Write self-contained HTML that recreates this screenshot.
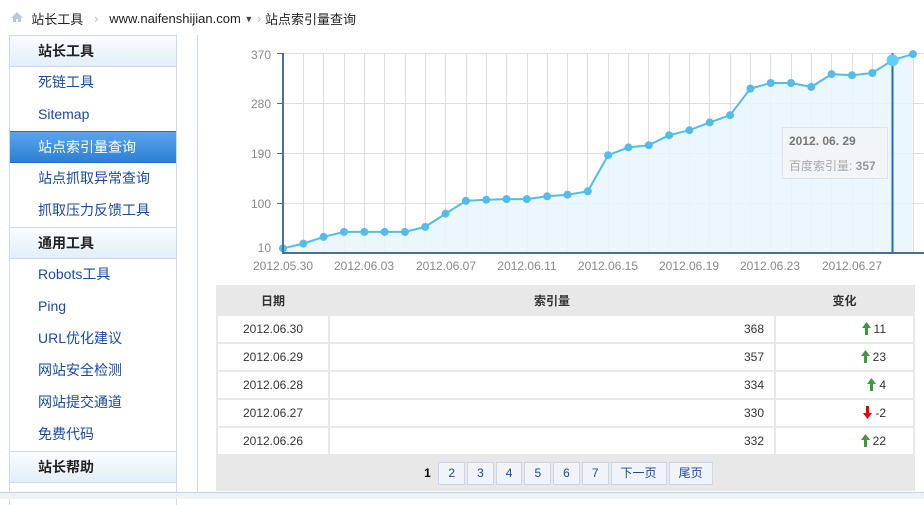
<!DOCTYPE html>
<html><head><meta charset="utf-8"><style>
*{margin:0;padding:0;box-sizing:border-box}
body{width:924px;height:499px;overflow:hidden;background:#fff;font-family:"Liberation Sans","Noto Sans CJK SC",sans-serif;font-size:13px;color:#333;position:relative}
.bc{position:absolute;top:9px;left:10px;font-size:13px;color:#222;white-space:nowrap}
.bc span{display:inline-block;vertical-align:middle}
.side{position:absolute;left:9px;top:35px;width:168px;height:470px;border:1px solid #c5dbef;border-bottom:none;border-top:none}
.side div{height:32px;line-height:31px;padding-left:28px;font-size:14px;color:#1a4aa0}
.side .h{background:linear-gradient(#fafcfe,#e3eef9);color:#222;font-weight:bold;border-bottom:1px solid #c5dbef;border-top:1px solid #c5dbef}
.side .sel{background:linear-gradient(#58a6ea,#2d7fd6);color:#fff;border-top:1px solid #2a70c0;border-bottom:1px solid #2a70c0}
.vl{position:absolute;left:197px;top:35px;width:1px;height:460px;background:#c5dbef}
.bot{position:absolute;left:0;top:492px;width:924px;height:7px;background:#eef2f5;border-top:1px solid #c7d3dc;z-index:5}
table{position:absolute;left:216px;top:285px;width:699px;border-collapse:separate;border-spacing:2px 2px;background:#e8e8e8;font-size:12px}
td,th{height:26px;background:#fff}
th{background:#e8e8e8;font-weight:bold;height:27px}
.pg{position:absolute;left:216px;top:455px;width:699px;height:36px;background:#e8e8e8;text-align:center;font-size:12px;padding-top:7px}
.pg span{display:inline-block;height:23px;line-height:21px;border:1px solid #c9d7e6;background:#f0f4f8;color:#1a4aa0;padding:0 9px;margin:0 1px}
.pg b{display:inline-block;width:20px;color:#000}
svg.a{vertical-align:-2px;margin-right:3px}
</style></head><body>
<div class="bc"><svg width="14" height="12" style="vertical-align:-1px"><path d="M7 1L1 7H3V11H6V8H8V11H11V7H13Z" fill="#b8c8d8"/></svg>&nbsp;&nbsp;<span>站长工具</span>&nbsp;&nbsp;&nbsp;<span style="color:#bbb">›</span>&nbsp;&nbsp;&nbsp;<span>www.naifenshijian.com</span> <span style="font-size:9px;color:#444">▼</span> <span style="color:#bbb">›</span> <span>站点索引量查询</span></div>
<div class="side">
<div class="h">站长工具</div><div>死链工具</div><div>Sitemap</div><div class="sel">站点索引量查询</div><div>站点抓取异常查询</div><div>抓取压力反馈工具</div>
<div class="h">通用工具</div><div>Robots工具</div><div>Ping</div><div>URL优化建议</div><div>网站安全检测</div><div>网站提交通道</div><div>免费代码</div><div class="h">站长帮助</div>
</div>
<div class="vl"></div>
<svg style="position:absolute;left:0;top:0" width="924" height="280" font-family="Liberation Sans, sans-serif" font-size="12" fill="#888">
<g stroke="#ddd" stroke-width="1">
<line x1="283" y1="53.5" x2="924" y2="53.5"/><line x1="283" y1="103.5" x2="924" y2="103.5"/><line x1="283" y1="153.5" x2="924" y2="153.5"/><line x1="283" y1="203.5" x2="924" y2="203.5"/>
<path d="M303.5 53V253M323.5 53V253M344.5 53V253M364.5 53V253M384.5 53V253M405.5 53V253M425.5 53V253M445.5 53V253M466.5 53V253M486.5 53V253M506.5 53V253M527.5 53V253M547.5 53V253M567.5 53V253M587.5 53V253M608.5 53V253M628.5 53V253M648.5 53V253M669.5 53V253M689.5 53V253M709.5 53V253M730.5 53V253M750.5 53V253M770.5 53V253M791.5 53V253M811.5 53V253M831.5 53V253M852.5 53V253M872.5 53V253M913.5 53V253"/>
</g>
<path fill="#e9f5fd" fill-opacity="0.85" d="M283 248.3L303.3 243.6L323.6 236.9L344 231.9L364.3 231.9L384.6 231.9L404.9 231.9L425.2 226.9L445.6 213.6L465.9 200.8L486.2 199.7L506.5 199.1L526.8 199.1L547.2 196.3L567.5 194.7L587.8 191.3L608.1 155.2L628.4 147.4L648.8 145.2L669.1 135.2L689.4 130.2L709.7 122.4L730 115.2L750.4 88.6L770.7 83L791 83L811.3 86.9L831.6 74.1L852 75.2L872.3 73L892.6 60.2L912.9 54.1V253H283Z"/>
<path fill="none" stroke="#52bde8" stroke-width="2" d="M283 248.3L303.3 243.6L323.6 236.9L344 231.9L364.3 231.9L384.6 231.9L404.9 231.9L425.2 226.9L445.6 213.6L465.9 200.8L486.2 199.7L506.5 199.1L526.8 199.1L547.2 196.3L567.5 194.7L587.8 191.3L608.1 155.2L628.4 147.4L648.8 145.2L669.1 135.2L689.4 130.2L709.7 122.4L730 115.2L750.4 88.6L770.7 83L791 83L811.3 86.9L831.6 74.1L852 75.2L872.3 73L892.6 60.2L912.9 54.1"/>
<g fill="#52bde8">
<circle cx="283" cy="248.3" r="4"/><circle cx="303.3" cy="243.6" r="4"/><circle cx="323.6" cy="236.9" r="4"/><circle cx="344" cy="231.9" r="4"/><circle cx="364.3" cy="231.9" r="4"/><circle cx="384.6" cy="231.9" r="4"/><circle cx="404.9" cy="231.9" r="4"/><circle cx="425.2" cy="226.9" r="4"/><circle cx="445.6" cy="213.6" r="4"/><circle cx="465.9" cy="200.8" r="4"/><circle cx="486.2" cy="199.7" r="4"/><circle cx="506.5" cy="199.1" r="4"/><circle cx="526.8" cy="199.1" r="4"/><circle cx="547.2" cy="196.3" r="4"/><circle cx="567.5" cy="194.7" r="4"/><circle cx="587.8" cy="191.3" r="4"/><circle cx="608.1" cy="155.2" r="4"/><circle cx="628.4" cy="147.4" r="4"/><circle cx="648.8" cy="145.2" r="4"/><circle cx="669.1" cy="135.2" r="4"/><circle cx="689.4" cy="130.2" r="4"/><circle cx="709.7" cy="122.4" r="4"/><circle cx="730" cy="115.2" r="4"/><circle cx="750.4" cy="88.6" r="4"/><circle cx="770.7" cy="83" r="4"/><circle cx="791" cy="83" r="4"/><circle cx="811.3" cy="86.9" r="4"/><circle cx="831.6" cy="74.1" r="4"/><circle cx="852" cy="75.2" r="4"/><circle cx="872.3" cy="73" r="4"/><circle cx="912.9" cy="54.1" r="4"/>
</g>
<line x1="892.5" y1="53" x2="892.5" y2="253" stroke="#1e6fb8" stroke-width="2"/>
<circle cx="892.6" cy="60.2" r="6" fill="#5ed0f8"/>
<line x1="283" y1="53" x2="283" y2="254" stroke="#4a6f9c" stroke-width="2"/>
<line x1="282" y1="253" x2="924" y2="253" stroke="#4a6f9c" stroke-width="2"/>
<g stroke="#4a6f9c"><path d="M277 53.5H283M277 103.5H283M277 153.5H283M277 203.5H283"/></g>
<g text-anchor="end"><text x="271" y="59">370</text><text x="271" y="108">280</text><text x="271" y="158">190</text><text x="271" y="208">100</text><text x="271" y="252">10</text></g>
<g text-anchor="middle"><text x="283" y="270">2012.05.30</text><text x="364" y="270">2012.06.03</text><text x="446" y="270">2012.06.07</text><text x="527" y="270">2012.06.11</text><text x="608" y="270">2012.06.15</text><text x="689" y="270">2012.06.19</text><text x="770" y="270">2012.06.23</text><text x="852" y="270">2012.06.27</text></g>
<rect x="782.5" y="127.5" width="105" height="51" fill="#f2f5f7" fill-opacity="0.9" stroke="#dde3e8"/>
<text x="789" y="145" font-weight="bold" fill="#777" font-size="12">2012. 06. 29</text>
<text x="789" y="170" fill="#aaa" font-size="12" font-family="Liberation Sans, Noto Sans CJK SC, sans-serif">百度索引量: <tspan font-weight="bold" fill="#999">357</tspan></text>
</svg>
<table>
<tr><th style="width:110px">日期</th><th>索引量</th><th style="width:137px">变化</th></tr>
<tr><td align="center">2012.06.30</td><td align="right" style="padding-right:10px">368</td><td align="right" style="padding-right:27px"><svg class="a" width="9" height="13"><path d="M4.5 0L0 6H3V13H6V6H9Z" fill="#3c9a3c"/></svg>11</td></tr>
<tr><td align="center">2012.06.29</td><td align="right" style="padding-right:10px">357</td><td align="right" style="padding-right:27px"><svg class="a" width="9" height="13"><path d="M4.5 0L0 6H3V13H6V6H9Z" fill="#3c9a3c"/></svg>23</td></tr>
<tr><td align="center">2012.06.28</td><td align="right" style="padding-right:10px">334</td><td align="right" style="padding-right:27px"><svg class="a" width="9" height="13"><path d="M4.5 0L0 6H3V13H6V6H9Z" fill="#3c9a3c"/></svg>4</td></tr>
<tr><td align="center">2012.06.27</td><td align="right" style="padding-right:10px">330</td><td align="right" style="padding-right:27px"><svg class="a" width="9" height="13"><path d="M4.5 13L0 7H3V0H6V7H9Z" fill="#e00"/></svg>-2</td></tr>
<tr><td align="center">2012.06.26</td><td align="right" style="padding-right:10px">332</td><td align="right" style="padding-right:27px"><svg class="a" width="9" height="13"><path d="M4.5 0L0 6H3V13H6V6H9Z" fill="#3c9a3c"/></svg>22</td></tr>
</table>
<div class="pg"><b>1</b><span>2</span><span>3</span><span>4</span><span>5</span><span>6</span><span>7</span><span>下一页</span><span>尾页</span></div>
<div class="bot"></div>
</body></html>
